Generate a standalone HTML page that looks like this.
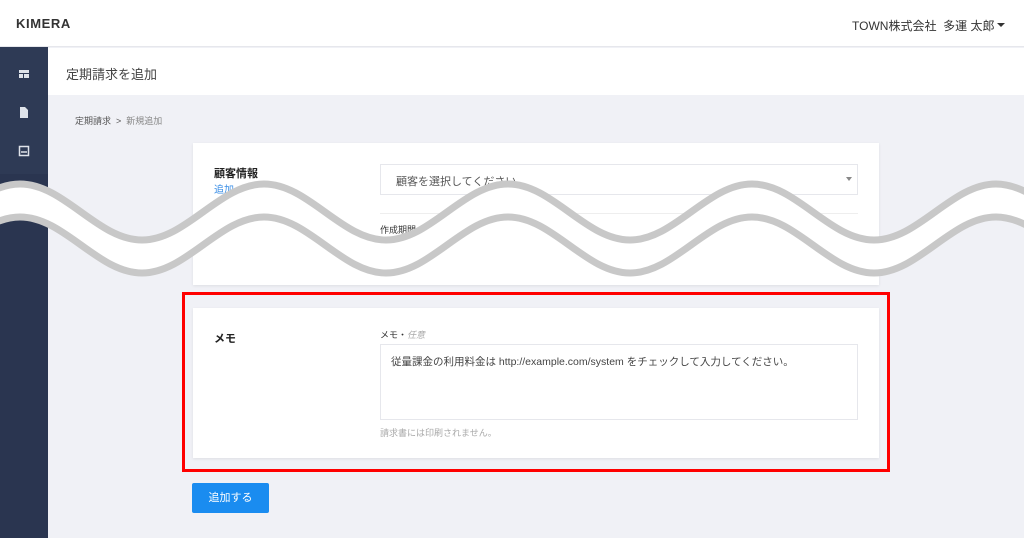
<!DOCTYPE html>
<html><head><meta charset="utf-8"><style>
*{margin:0;padding:0;box-sizing:border-box}
body{width:1024px;height:538px;overflow:hidden;background:#f0f1f6;font-family:"Liberation Sans","Noto Sans CJK JP",sans-serif;position:relative;color:#333}
.abs{position:absolute}
</style></head><body>
<div class="abs" style="left:0;top:0;width:1024px;height:47px;background:#fff;border-bottom:1px solid #e6e7ec"></div>
<div class="abs" style="left:16px;top:16px;font-size:13px;font-weight:bold;letter-spacing:0.6px;color:#333">KIMERA</div>
<div class="abs" style="left:852px;top:17px;font-size:12px;color:#333">TOWN株式会社&nbsp;&nbsp;多運 太郎</div>
<div class="abs" style="left:997px;top:23px;width:0;height:0;border-left:4px solid transparent;border-right:4px solid transparent;border-top:4px solid #333"></div>
<div class="abs" style="left:0;top:47px;width:48px;height:491px;background:#2e3a55"></div>
<div class="abs" style="left:0;top:174px;width:48px;height:364px;background:#2a3550"></div>
<svg class="abs" style="left:0;top:47px" width="48" height="130">
<g fill="#dfe3ea"><rect x="19" y="23" width="10" height="3"/><rect x="19" y="27" width="4" height="4"/><rect x="24" y="27" width="5" height="4"/></g>
<path d="M20 60h5l3 3v8h-8z" fill="#dfe3ea"/>
<rect x="19.5" y="99.5" width="9" height="9" fill="none" stroke="#dfe3ea" stroke-width="1.5"/><path d="M21 105h6" stroke="#dfe3ea" stroke-width="1.5"/>
</svg>
<div class="abs" style="left:48px;top:48px;width:976px;height:47px;background:#fff"></div>
<div class="abs" style="left:66px;top:64px;font-size:13px;color:#444">定期請求を追加</div>
<div class="abs" style="left:75px;top:114px;font-size:9px;color:#555">定期請求 &nbsp;&gt;&nbsp; <span style="color:#888">新規追加</span></div>
<div class="abs" style="left:193px;top:143px;width:686px;height:142px;background:#fff;box-shadow:0 1px 3px rgba(0,0,0,.08)"></div>
<div class="abs" style="left:214px;top:165px;font-size:11px;font-weight:bold;color:#222">顧客情報</div>
<div class="abs" style="left:214px;top:181px;font-size:10px;color:#3a8ee6">追加</div>
<div class="abs" style="left:380px;top:164px;width:478px;height:31px;border:1px solid #e6e7ec"></div>
<div class="abs" style="left:396px;top:173px;font-size:11px;color:#555">顧客を選択してください</div>
<div class="abs" style="left:846px;top:177px;width:0;height:0;border-left:3px solid transparent;border-right:3px solid transparent;border-top:4px solid #888"></div>
<div class="abs" style="left:380px;top:213px;width:478px;height:1px;background:#eee"></div>
<div class="abs" style="left:380px;top:223px;font-size:9px;color:#333">作成期間</div>
<svg class="abs" style="left:0;top:0" width="1024" height="538">
<path d="M-224 184 C-179.6 184 -146.4 240 -102 240 S-24.4 184 20 184 S97.6 240 142 240 S219.6 184 264 184 S341.6 240 386 240 S463.6 184 508 184 S585.6 240 630 240 S707.6 184 752 184 S829.6 240 874 240 S951.6 184 996 184 S1073.6 240 1118 240 L1118 273 C1073.6 273 1040.4 217 996 217 S918.4 273 874 273 S796.4 217 752 217 S674.4 273 630 273 S552.4 217 508 217 S430.4 273 386 273 S308.4 217 264 217 S186.4 273 142 273 S64.4 217 20 217 S-57.6 273 -102 273 S-179.6 217 -224 217 Z" fill="#fff"/>
<path d="M-224 184 C-179.6 184 -146.4 240 -102 240 S-24.4 184 20 184 S97.6 240 142 240 S219.6 184 264 184 S341.6 240 386 240 S463.6 184 508 184 S585.6 240 630 240 S707.6 184 752 184 S829.6 240 874 240 S951.6 184 996 184 S1073.6 240 1118 240" fill="none" stroke="#c8c8c8" stroke-width="7"/>
<path d="M-224 217 C-179.6 217 -146.4 273 -102 273 S-24.4 217 20 217 S97.6 273 142 273 S219.6 217 264 217 S341.6 273 386 273 S463.6 217 508 217 S585.6 273 630 273 S707.6 217 752 217 S829.6 273 874 273 S951.6 217 996 217 S1073.6 273 1118 273" fill="none" stroke="#c8c8c8" stroke-width="7"/>
</svg>
<div class="abs" style="left:193px;top:308px;width:686px;height:150px;background:#fff;box-shadow:0 1px 3px rgba(0,0,0,.08)"></div>
<div class="abs" style="left:214px;top:330px;font-size:11px;font-weight:bold;color:#222">メモ</div>
<div class="abs" style="left:380px;top:328px;font-size:9px;color:#333">メモ・<i style="color:#aaa">任意</i></div>
<div class="abs" style="left:380px;top:344px;width:478px;height:76px;border:1px solid #e6e7ec"></div>
<div class="abs" style="left:391px;top:354px;font-size:10.5px;color:#444">従量課金の利用料金は http://example.com/system をチェックして入力してください。</div>
<div class="abs" style="left:380px;top:426px;font-size:9px;color:#aaa">請求書には印刷されません。</div>
<div class="abs" style="left:182px;top:292px;width:708px;height:180px;border:3px solid #f00"></div>
<div class="abs" style="left:192px;top:483px;width:77px;height:30px;background:#1a8cf0;border-radius:2px;color:#fff;font-size:11px;text-align:center;line-height:30px">追加する</div>
</body></html>
